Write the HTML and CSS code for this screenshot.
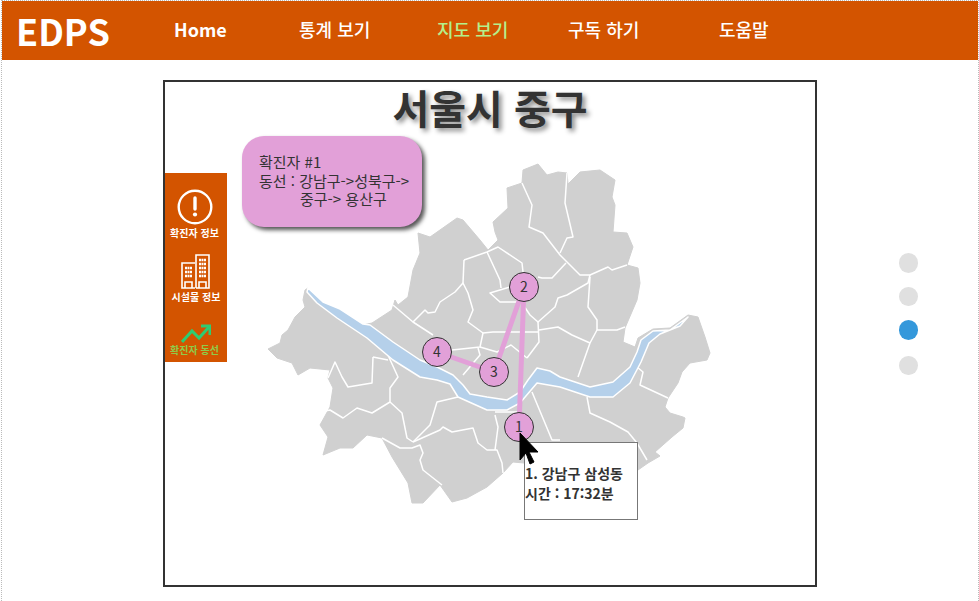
FILE: index.html
```html
<!DOCTYPE html>
<html lang="ko">
<head>
    <meta charset="UTF-8">
    <title>EDPS</title>
    <link rel="stylesheet" href="styles.css">
</head>
<body>
<div class="page">
    <header class="top-bar">
        <div class="logo">EDPS</div>
        <nav class="top-nav">
            <a class="nav-home">Home</a>
            <a>통계 보기</a>
            <a class="nav-active">지도 보기</a>
            <a>구독 하기</a>
            <a>도움말</a>
        </nav>
    </header>

    <main class="content">
        <section class="map-frame">
            <!-- map uses page coordinates through the viewBox -->
            <svg class="seoul-map" viewBox="165 82 650 503" width="650" height="503">
                <polygon class="land" points="305,290 308,288 323,303 340,312 363,325 372,323 392,310 395,300 398,305 408,297 413,270 420,253 418,233 430,237 457,218 463,220 480,240 488,250 498,240 495,232 493,222 508,208 507,188 522,183 523,170 538,164 547,175 558,172 567,173 568,184 580,172 600,170 615,180 612,197 615,205 613,232 627,233 633,247 627,265 638,268 640,283 637,300 625,328 623,342 635,347 638,338 653,329 670,328 688,315 698,317 705,337 710,353 707,360 690,363 682,372 678,383 668,398 665,407 670,413 683,417 685,418 683,428 672,437 655,452 660,456 648,463 638,470 600,470 513,462 503,473 487,487 467,498 452,502 440,485 423,503 412,503 408,483 392,457 382,438 367,435 353,448 340,448 323,455 328,437 320,425 330,407 333,388 328,378 330,370 310,368 298,375 292,363 277,358 268,349 280,343 282,335 288,330 295,317 305,307 303,300"/>
                <g class="borders">
                    <polyline points="522,183 532,205 529,227 543,233 560,255 580,275 590,275 608,267 612,270 627,265"/>
                    <polyline points="567,173 565,203 573,237 567,238 560,253"/>
                    <polyline points="566,263 552,278 542,278 538,277"/>
                    <polyline points="464,260 487,252 498,247 522,263 523,272"/>
                    <polyline points="464,260 463,283"/>
                    <polyline points="487,252 500,280 501,288"/>
                    <polyline points="510,287 490,293 500,302 517,302"/>
                    <polyline points="590,275 588,283 567,295 558,298 555,307 538,322 530,315 522,303"/>
                    <polyline points="590,277 588,307 597,320 597,330 617,330 625,327"/>
                    <polyline points="597,330 590,343 578,377"/>
                    <polyline points="538,322 539,342 527,358"/>
                    <polyline points="539,330 558,327 572,335 590,343"/>
                    <polyline points="483,333 493,332 539,332"/>
                    <polyline points="393,305 413,322 425,310 428,313 435,312 440,302 455,292 463,283 468,293 473,310 468,322 483,333 480,347 452,350"/>
                    <polyline points="413,322 433,335"/>
                    <polyline points="478,348 480,355 463,375"/>
                    <polyline points="480,347 497,352 511,345 527,358"/>
                    <polyline points="373,357 372,383 348,387 342,377 335,362 328,378"/>
                    <polyline points="373,357 388,360"/>
                    <polyline points="387,353 398,377 390,388 390,402 372,413 357,408 343,418 330,410 320,412"/>
                    <polyline points="390,402 402,413 407,438 413,442"/>
                    <polyline points="382,438 400,448 412,448 420,445 423,453 420,460 423,470 442,485"/>
                    <polyline points="413,442 440,430 443,427 452,432 473,428 478,443 487,450 497,450 502,463 503,473"/>
                    <polyline points="413,442 430,425 437,402 458,397"/>
                    <polyline points="495,415 498,427 495,450"/>
                    <polyline points="495,412 520,412"/>
                    <polyline points="532,392 552,440 560,440"/>
                    <polyline points="587,397 590,413 610,422 628,432 637,443 647,460"/>
                    <polyline points="637,367 643,372 640,385 668,398"/>
                </g>
                <polygon class="river" points="308,288 323,302 340,309 363,324 370,325 393,342 420,360 437,367 453,375 463,385 470,394 487,397 507,400 520,392 528,380 537,368 550,371 560,377 590,387 613,382 630,367 637,352 641,340 653,331 670,330 688,317 680,326 660,334 649,343 641,362 630,383 613,397 590,397 560,387 537,383 520,403 507,410 487,410 458,397 450,384 437,380 420,377 393,360 367,338 337,318 317,303 307,292"/>

                <line class="route" x1="524" y1="287" x2="494" y2="372"/>
                <line class="route" x1="524" y1="287" x2="519" y2="427"/>
                <line class="route" x1="437" y1="352" x2="494" y2="372"/>

                <circle class="node" cx="519" cy="427" r="14.5"/>
                <circle class="node" cx="524" cy="287" r="14.5"/>
                <circle class="node" cx="494" cy="372" r="14.5"/>
                <circle class="node" cx="437" cy="352" r="14.5"/>
                <text class="node-num" x="519" y="432">1</text>
                <text class="node-num" x="524" y="292">2</text>
                <text class="node-num" x="494" y="377">3</text>
                <text class="node-num" x="437" y="357">4</text>
            </svg>

            <h1 class="map-title">서울시 중구</h1>

            <div class="frame-row">
                <aside class="side-menu">
                    <div class="side-item">
                        <svg width="36" height="36" viewBox="0 0 36 36">
                            <circle cx="18" cy="18" r="16.3" fill="none" stroke="#fff" stroke-width="2.4"/>
                            <line x1="18" y1="9" x2="18" y2="20" stroke="#fff" stroke-width="3.4" stroke-linecap="round"/>
                            <circle cx="18" cy="25.5" r="2.1" fill="#fff"/>
                        </svg>
                        <span>확진자 정보</span>
                    </div>
                    <div class="side-item side-item-building">
                        <svg width="30" height="35" viewBox="0 0 30 35" fill="none" stroke="#fff" stroke-width="1.6">
                            <path d="M14 34 H1 V9 H14"/>
                            <path d="M15 34 V1 H28 V34 H15"/>
                            <path d="M4 34 V28 H11 V34 M18 34 V28 H25 V34"/>
                            <path d="M4 14 H11 M4 18 H11 M4 22 H11 M18 6 H25 M18 10 H25 M18 14 H25 M18 18 H25 M18 22 H25" stroke-dasharray="2 0.5" stroke-width="2.4"/>
                        </svg>
                        <span>시설물 정보</span>
                    </div>
                    <div class="side-item side-item-route">
                        <svg width="30" height="20" viewBox="0 0 30 20" fill="none" stroke="#2ecc71" stroke-width="3">
                            <polyline points="1,18 11,7 18,14 28,3"/>
                            <polyline points="20,2 29,2 29,11"/>
                        </svg>
                        <span>확진자 동선</span>
                    </div>
                </aside>

                <div class="info-bubble">
                    <p>확진자 #1</p>
                    <p>동선 : 강남구-&gt;성북구-&gt;</p>
                    <p class="info-indent">중구-&gt; 용산구</p>
                </div>
            </div>

            <div class="map-tooltip">
                <p>1. 강남구 삼성동</p>
                <p>시간 : 17:32분</p>
            </div>
            <svg class="map-cursor" width="20" height="33" viewBox="0 0 20 33">
                <path d="M1 1 L1 28 L7 21 L11 32 L15 30 L10 20 L19 20 Z" fill="#000" stroke="#000" stroke-width="1"/>
            </svg>
        </section>

        <div class="page-dots">
            <span class="dot"></span>
            <span class="dot"></span>
            <span class="dot dot-active"></span>
            <span class="dot"></span>
        </div>
    </main>
</div>
</body>
</html>
```

FILE: styles.css
```css
html, body {
    margin: 0;
    padding: 0;
    background: #fff;
}
body {
    font-family: "Noto Sans CJK KR", "Noto Sans", sans-serif;
    color: #333;
    overflow: hidden;
}
p, h1 {
    margin: 0;
}
.page {
    box-sizing: border-box;
    width: 978px;
    height: 601px;
    margin-left: 1px;
    border: 1px dotted #bbb;
    border-bottom: none;
}

/* top bar */
.top-bar {
    display: flex;
    align-items: center;
    height: 59px;
    background-color: #d35400;
    color: #fff;
    padding-left: 14px;
}
.logo {
    width: 158px;
    font-size: 36px;
    font-weight: 700;
    line-height: 59px;
}
.top-nav {
    display: grid;
    grid-template-columns: 125px 138px 131px 151px 100px;
    font-size: 18px;
    font-weight: 500;
    line-height: 24px;
}
.top-nav a {
    margin-top: -4px;
}
.top-nav .nav-home {
    font-weight: 700;
}
.top-nav .nav-active {
    color: #b4f08c;
}

/* main area */
.content {
    display: flex;
    align-items: flex-start;
    padding: 20px 0 0 161px;
}
.map-frame {
    position: relative;
    z-index: 0;
    box-sizing: border-box;
    width: 654px;
    height: 507px;
    border: 2px solid #333;
}
.seoul-map {
    position: absolute;
    left: 0;
    top: 0;
    z-index: -1;
}
.land {
    fill: #d0d0d0;
    stroke: #d0d0d0;
    stroke-width: 1;
    stroke-linejoin: round;
}
.borders polyline {
    fill: none;
    stroke: #fff;
    stroke-width: 1.5;
    stroke-linejoin: round;
}
.river {
    fill: #b5d0ea;
    stroke: #fff;
    stroke-width: 1.5;
    stroke-linejoin: round;
}
.route {
    stroke: #e2a0d8;
    stroke-width: 5;
}
.node {
    fill: #e2a0d8;
    stroke: #333;
    stroke-width: 1;
}
.node-num {
    font-size: 14px;
    fill: #333;
    text-anchor: middle;
}
.map-title {
    height: 54px;
    font-size: 40px;
    font-weight: 700;
    line-height: 50px;
    text-align: center;
    text-shadow: 3px 3px 5px #888;
}
.frame-row {
    display: flex;
    align-items: flex-start;
}

/* left menu */
.side-menu {
    display: flex;
    flex-direction: column;
    align-items: center;
    box-sizing: border-box;
    width: 62px;
    height: 189px;
    margin-top: 37px;
    padding-top: 16px;
    padding-right: 3px;
    background-color: #d35400;
    color: #fff;
}
.side-item {
    display: flex;
    flex-direction: column;
    align-items: center;
    font-size: 10px;
    font-weight: 700;
    line-height: 12px;
}
.side-item svg {
    display: block;
    margin-bottom: 2px;
}
.side-item-building {
    margin-top: 15px;
    margin-left: 3px;
}
.side-item-route {
    margin-top: 21px;
    color: #8ecb4a;
}
.side-item-route svg {
    margin-bottom: 0;
    margin-left: 2px;
}

/* info box */
.info-bubble {
    box-sizing: border-box;
    width: 180px;
    height: 91px;
    margin-left: 15px;
    padding-top: 17px;
    padding-left: 17px;
    background-color: #e2a0d8;
    border-radius: 22px;
    box-shadow: 3px 3px 4px #555;
    font-size: 15px;
    line-height: 18.5px;
}
.info-indent {
    padding-left: 41px;
}

/* hover tooltip */
.map-tooltip {
    position: absolute;
    left: 359px;
    top: 360px;
    box-sizing: border-box;
    width: 114px;
    height: 78px;
    padding: 20px 0 0 0;
    background: #fff;
    border: 1px solid #777;
    font-size: 14px;
    font-weight: 700;
    line-height: 20px;
}
.map-cursor {
    position: absolute;
    left: 354px;
    top: 350px;
}

/* right dots */
.page-dots {
    display: flex;
    flex-direction: column;
    gap: 14px;
    margin: 173px 0 0 82px;
}
.dot {
    width: 19px;
    height: 19.5px;
    border-radius: 50%;
    background-color: #e0e0e0;
}
.dot-active {
    background-color: #3498db;
    margin-bottom: 2px;
}
```
